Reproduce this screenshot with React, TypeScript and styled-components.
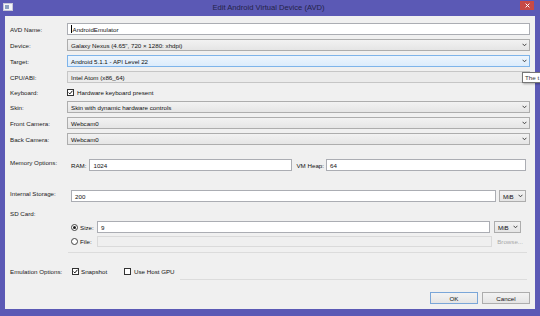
import styled, { createGlobalStyle } from "styled-components";

const FONT = `"Liberation Sans", Arial, sans-serif`;
const FRAME = "#5b59b5";

const GlobalStyle = createGlobalStyle`
  html, body { margin: 0; padding: 0; overflow: hidden; background: ${FRAME}; }
  body { font-family: ${FONT}; }
`;

const Window = styled.div`
  position: relative;
  width: 540px;
  height: 316px;
  background: ${FRAME};
  display: flex;
  flex-direction: column;
  overflow: hidden;
  font-family: ${FONT};
  font-size: 6.2px;
  color: #111;
`;

const TitleBar = styled.div`
  height: 16px;
  flex: none;
  display: grid;
  grid-template-columns: 1fr auto 1fr;
  padding: 0 6px 0 3px;
`;

const AppIcon = styled.svg`
  margin-top: 3px;
`;

const Title = styled.div`
  font-size: 7.6px;
  line-height: 16px;
  color: #242348;
`;

const CloseButton = styled.div`
  justify-self: end;
  width: 14px;
  height: 9px;
  margin-top: 1px;
  background: #c74a45;
  display: flex;
  align-items: center;
  justify-content: center;
`;

const Client = styled.div`
  flex: 1;
  margin: 0 5px 7px;
  background: #f0f0f0;
  padding: 7px 5px 5px;
  display: flex;
  flex-direction: column;
`;

const Row = styled.div<{ $top?: number; $h?: number; $start?: boolean }>`
  display: grid;
  grid-template-columns: 57px 1fr;
  align-items: ${(p) => (p.$start ? "start" : "center")};
  margin-top: ${(p) => p.$top ?? 0}px;
  height: ${(p) => (p.$h ? `${p.$h}px` : "auto")};
`;

const Label = styled.div`
  line-height: 7px;
  white-space: nowrap;
  color: #1a1a1a;
`;

const Input = styled.div<{ $w?: number; $disabled?: boolean }>`
  box-sizing: border-box;
  height: 12px;
  ${(p) => (p.$w ? `width: ${p.$w}px; flex: none;` : "flex: 1;")}
  min-width: 0;
  border: 1px solid ${(p) => (p.$disabled ? "#dadada" : "#abadb3")};
  background: ${(p) => (p.$disabled ? "#efefef" : "#fff")};
  padding: 0 3px;
  display: flex;
  align-items: center;
  white-space: nowrap;
`;

const Caret = styled.span`
  width: 1px;
  height: 8px;
  background: #000;
  margin-right: 0.5px;
`;

const Combo = styled.div<{ $focus?: boolean; $plain?: boolean; $w?: number }>`
  box-sizing: border-box;
  height: 12px;
  ${(p) => (p.$w ? `width: ${p.$w}px; flex: none;` : "")}
  border: 1px solid ${(p) => (p.$focus ? "#7eb4ea" : p.$plain ? "#c6c6c6" : "#adadad")};
  background: ${(p) =>
    p.$focus
      ? "linear-gradient(#edf5fd, #dcecfc)"
      : p.$plain
      ? "#ebebeb"
      : "linear-gradient(#f2f2f2, #e5e5e5)"};
  padding: 0 2px 0 3px;
  display: flex;
  align-items: center;
  justify-content: space-between;
  white-space: nowrap;
`;

const Chevron = () => (
  <svg width="5" height="4" viewBox="0 0 5 4">
    <polyline points="0.6,0.8 2.5,2.8 4.4,0.8" fill="none" stroke="#333" strokeWidth="0.9" />
  </svg>
);

const Inline = styled.div<{ $pl?: number; $pr?: number }>`
  display: flex;
  align-items: center;
  padding: 0 ${(p) => p.$pr ?? 0}px 0 ${(p) => p.$pl ?? 0}px;
  min-width: 0;
`;

const Text = styled.span<{ $ml?: number; $mr?: number; $w?: number; $muted?: boolean }>`
  margin-left: ${(p) => p.$ml ?? 0}px;
  margin-right: ${(p) => p.$mr ?? 0}px;
  ${(p) => (p.$w ? `width: ${p.$w}px; flex: none;` : "")}
  white-space: nowrap;
  color: ${(p) => (p.$muted ? "#a8a8a8" : "inherit")};
`;

const Box = styled.span`
  box-sizing: border-box;
  width: 7px;
  height: 7px;
  flex: none;
  border: 1px solid #333;
  background: #fff;
  display: flex;
  align-items: center;
  justify-content: center;
`;

const Check = ({ on }: { on?: boolean }) => (
  <Box>
    {on && (
      <svg width="5" height="5" viewBox="0 0 5 5">
        <polyline points="0.6,2.6 1.9,3.9 4.4,0.8" fill="none" stroke="#111" strokeWidth="1" />
      </svg>
    )}
  </Box>
);

const RadioCircle = styled.span`
  box-sizing: border-box;
  width: 7px;
  height: 7px;
  flex: none;
  border: 1px solid #444;
  border-radius: 50%;
  background: #fff;
  display: flex;
  align-items: center;
  justify-content: center;
`;

const Dot = styled.span`
  width: 3px;
  height: 3px;
  border-radius: 50%;
  background: #1a1a1a;
`;

const RadioLabel = styled.div`
  display: flex;
  align-items: center;
  width: 26px;
  flex: none;
`;

const Stack = styled.div`
  display: flex;
  flex-direction: column;
  padding-top: 11px;
`;

const Rule = styled.div<{ $top?: number; $ml?: number }>`
  height: 1px;
  background: #dcdcdc;
  margin: ${(p) => p.$top ?? 0}px 3px 0 ${(p) => p.$ml ?? 1}px;
`;

const Footer = styled.div`
  margin-top: auto;
  display: flex;
  justify-content: flex-end;
  gap: 4px;
`;

const Button = styled.div<{ $default?: boolean }>`
  box-sizing: border-box;
  width: 48px;
  height: 12px;
  border: 1px solid ${(p) => (p.$default ? "#7aa6d8" : "#adadad")};
  background: linear-gradient(#f3f3f3, #e5e5e5);
  display: flex;
  align-items: center;
  justify-content: center;
`;

const Tooltip = styled.div`
  position: absolute;
  left: 522px;
  top: 72px;
  width: 30px;
  height: 11px;
  box-sizing: border-box;
  padding: 0 2px;
  border: 1px solid #767676;
  background: #fff;
  box-shadow: 1px 1px 2px rgba(0, 0, 0, 0.3);
  display: flex;
  align-items: center;
  white-space: nowrap;
  color: #333;
`;

export default function App() {
  return (
    <>
      <GlobalStyle />
      <Window>
        <TitleBar>
          <AppIcon width="10" height="8" viewBox="0 0 10 8">
            <rect x="0.5" y="0.5" width="9" height="7" fill="#f4f4f8" stroke="#c8c8d8" />
            <rect x="2" y="2" width="4" height="4" fill="#8c9fc0" />
          </AppIcon>
          <Title>Edit Android Virtual Device (AVD)</Title>
          <CloseButton>
            <svg width="5" height="5" viewBox="0 0 5 5">
              <path d="M0.6 0.6 L4.4 4.4 M4.4 0.6 L0.6 4.4" stroke="#fff" strokeWidth="1" />
            </svg>
          </CloseButton>
        </TitleBar>
        <Client>
          <Row $h={12}>
            <Label>AVD Name:</Label>
            <Input>
              <Caret />
              AndroidEmulator
            </Input>
          </Row>
          <Row $top={4} $h={12}>
            <Label>Device:</Label>
            <Combo>
              Galaxy Nexus (4.65", 720 × 1280: xhdpi)
              <Chevron />
            </Combo>
          </Row>
          <Row $top={4} $h={12}>
            <Label>Target:</Label>
            <Combo $focus>
              Android 5.1.1 - API Level 22
              <Chevron />
            </Combo>
          </Row>
          <Row $top={4} $h={12}>
            <Label>CPU/ABI:</Label>
            <Combo $plain>Intel Atom (x86_64)</Combo>
          </Row>
          <Row $top={4} $h={10}>
            <Label>Keyboard:</Label>
            <Inline>
              <Check on />
              <Text $ml={3}>Hardware keyboard present</Text>
            </Inline>
          </Row>
          <Row $top={4} $h={12}>
            <Label>Skin:</Label>
            <Combo>
              Skin with dynamic hardware controls
              <Chevron />
            </Combo>
          </Row>
          <Row $top={4} $h={12}>
            <Label>Front Camera:</Label>
            <Combo>
              Webcam0
              <Chevron />
            </Combo>
          </Row>
          <Row $top={4} $h={12}>
            <Label>Back Camera:</Label>
            <Combo>
              Webcam0
              <Chevron />
            </Combo>
          </Row>
          <Row $top={14} $start>
            <Label>Memory Options:</Label>
            <Inline $pl={4} $pr={4}>
              <Text $mr={3}>RAM:</Text>
              <Input $w={203}>1024</Input>
              <Text $ml={4} $mr={2}>VM Heap:</Text>
              <Input>64</Input>
            </Inline>
          </Row>
          <Row $top={19} $start>
            <Label>Internal Storage:</Label>
            <Inline $pl={4} $pr={4}>
              <Input>200</Input>
              <Combo $w={27} style={{ marginLeft: 3 }}>
                MiB
                <Chevron />
              </Combo>
            </Inline>
          </Row>
          <Row $top={8} $start>
            <Label>SD Card:</Label>
            <Stack>
              <Inline $pl={4} $pr={9}>
                <RadioLabel>
                  <RadioCircle>
                    <Dot />
                  </RadioCircle>
                  <Text $ml={2}>Size:</Text>
                </RadioLabel>
                <Input>9</Input>
                <Combo $w={27} style={{ marginLeft: 4 }}>
                  MiB
                  <Chevron />
                </Combo>
              </Inline>
              <Inline $pl={4} $pr={7} style={{ marginTop: 3, height: 11 }}>
                <RadioLabel>
                  <RadioCircle />
                  <Text $ml={2}>File:</Text>
                </RadioLabel>
                <Input $disabled style={{ height: 11 }} />
                <Text $ml={5} $muted>
                  Browse...
                </Text>
              </Inline>
              <Rule $top={5} />
            </Stack>
          </Row>
          <Row $top={13} $h={10}>
            <Label>Emulation Options:</Label>
            <Inline $pl={5}>
              <Check on />
              <Text $ml={2} $w={43}>
                Snapshot
              </Text>
              <Check />
              <Text $ml={3}>Use Host GPU</Text>
            </Inline>
          </Row>
          <Row>
            <span />
            <Rule $top={3} $ml={113} />
          </Row>
          <Footer>
            <Button $default>OK</Button>
            <Button>Cancel</Button>
          </Footer>
        </Client>
        <Tooltip>The t</Tooltip>
      </Window>
    </>
  );
}
